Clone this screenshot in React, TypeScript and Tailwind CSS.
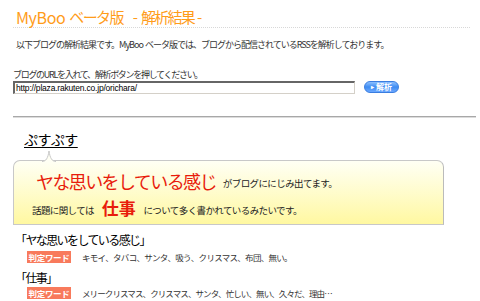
import React from "react";

const jp = { fontFamily: '"Noto Sans CJK JP", "Noto Sans", sans-serif' };

export default function App() {
  return (
    <div className="w-[480px] h-[301px] bg-white overflow-hidden relative text-black" style={jp}>
      {/* Title */}
      <div className="flex items-end pl-[16px] pt-[3px] h-[27px] text-[#ff9c1a]">
        <span className="text-[16px] leading-[20px] tracking-[-0.4px]">MyBoo</span>
        <span className="ml-[4px] text-[15px] leading-[20px] tracking-[-1.6px]">ベータ版</span>
        <span className="ml-[10px] text-[15px] leading-[20px]">-</span>
        <span className="ml-[3px] text-[15px] leading-[20px] tracking-[-1.8px]">解析結果</span>
        <span className="ml-[3px] text-[15px] leading-[20px]">-</span>
      </div>
      <div className="mx-[13px] w-[457px] border-t border-dotted border-[#d8d8d8]" />
      {/* description */}
      <div className="pl-[16px] mt-[11px] h-[12px] text-[9px] leading-[12px] tracking-[-1px] text-[#333]">
        以下ブログの解析結果です。MyBoo&nbsp;&nbsp;ベータ版では、ブログから配信されているRSSを解析しております。
      </div>
      <div className="pl-[13px] mt-[18px] h-[12px] text-[9px] leading-[12px] tracking-[-1.3px] text-[#333]">
        ブログのURLを入れて、解析ボタンを押してください。
      </div>
      <div className="flex items-center pl-[13px] mt-[-1px] h-[14px]">
        <div className="w-[342px] h-[13px] border-t-2 border-l-2 border-t-[#666] border-l-[#666] border-r border-b border-r-[#d4d0c8] border-b-[#d4d0c8] text-[8.5px] leading-[10px] pl-[1px] text-black tracking-[-0.2px]" style={{ fontFamily: '"Liberation Sans", sans-serif' }}>
          http://plaza.rakuten.co.jp/orichara/
        </div>
        <div className="ml-[9px] w-[35px] h-[12px] rounded-full bg-gradient-to-b from-[#8cc0ff] via-[#3d8cf2] to-[#6aa8ff] border border-[#3a7de0] flex items-center justify-center text-white text-[8px] leading-[10px] font-bold">
          <span className="text-[6px] mr-[2px]">▸</span>解析
        </div>
      </div>
      {/* hr */}
      <div className="mx-[13px] mt-[22px] w-[463px] h-[2px] bg-[#a8a8a8] border-b border-[#dcdcdc]" />
      {/* name */}
      <div className="pl-[24px] mt-[8px] h-[20px]">
        <span className="text-[14px] leading-[18px] underline underline-offset-[2px] tracking-[-0.5px]">ぷすぷす</span>
      </div>
      {/* bubble */}
      <div className="relative mt-[14px] ml-[13px] w-[431px] h-[65px] rounded-t-[7px] border border-[#c8c8c8] border-r-[#bbbbbb] bg-gradient-to-b from-[#fffff4] to-[#fff8a0]">
        <svg className="absolute left-[28px] top-[-11px]" width="14" height="12" viewBox="0 0 14 12">
          <path d="M0 11.5 C4 11.5 6 8 7 1 C8 8 10 11.5 14 11.5 Z" fill="#fffff4" />
          <path d="M0 11.5 C4 11.5 6 8 7 1 C8 8 10 11.5 14 11.5" fill="none" stroke="#c8c8c8" strokeWidth="1" />
        </svg>
        <div className="flex items-end pl-[22px] pt-[7px] h-[31px]">
          <span className="text-[18px] leading-[22px] text-[#e81c0c] tracking-[-1.6px]">ヤな思いをしている感じ</span>
          <span className="ml-[7px] mb-[3px] text-[9.5px] leading-[12px] tracking-[-0.6px] text-[#222]">がブログににじみ出てます。</span>
        </div>
        <div className="flex items-end pl-[18px] mt-[5px] h-[22px]">
          <span className="mb-[3px] text-[9.5px] leading-[12px] tracking-[-0.6px] text-[#222]">話題に関しては</span>
          <span className="ml-[8px] text-[17px] leading-[22px] font-bold text-[#e81c0c] tracking-[-0.2px]">仕事</span>
          <span className="ml-[8px] mb-[3px] text-[9.5px] leading-[12px] tracking-[-0.6px] text-[#222]">について多く書かれているみたいです。</span>
        </div>
      </div>
      {/* results */}
      <div className="pl-[15px] mt-[7px] h-[16px] text-[12px] leading-[16px] tracking-[-1.6px]">「ヤな思いをしている感じ」</div>
      <div className="flex items-center pl-[27px] mt-[3px] h-[12px]">
        <span className="w-[44px] h-[12px] bg-[#f87a5c] text-white text-[8.5px] leading-[12px] font-bold text-center tracking-[-0.3px]">判定ワード</span>
        <span className="ml-[11px] text-[8.5px] leading-[12px] tracking-[-0.7px] text-[#333]">キモイ、タバコ、サンタ、吸う、クリスマス、布団、無い。</span>
      </div>
      <div className="pl-[15px] mt-[7px] h-[16px] text-[12px] leading-[16px] tracking-[-1.6px]">「仕事」</div>
      <div className="flex items-center pl-[27px] mt-[1px] h-[12px]">
        <span className="w-[44px] h-[12px] bg-[#f87a5c] text-white text-[8.5px] leading-[12px] font-bold text-center tracking-[-0.3px]">判定ワード</span>
        <span className="ml-[11px] text-[8.5px] leading-[12px] tracking-[-0.9px] text-[#333]">メリークリスマス、クリスマス、サンタ、忙しい、無い、久々だ、理由…</span>
      </div>
    </div>
  );
}
